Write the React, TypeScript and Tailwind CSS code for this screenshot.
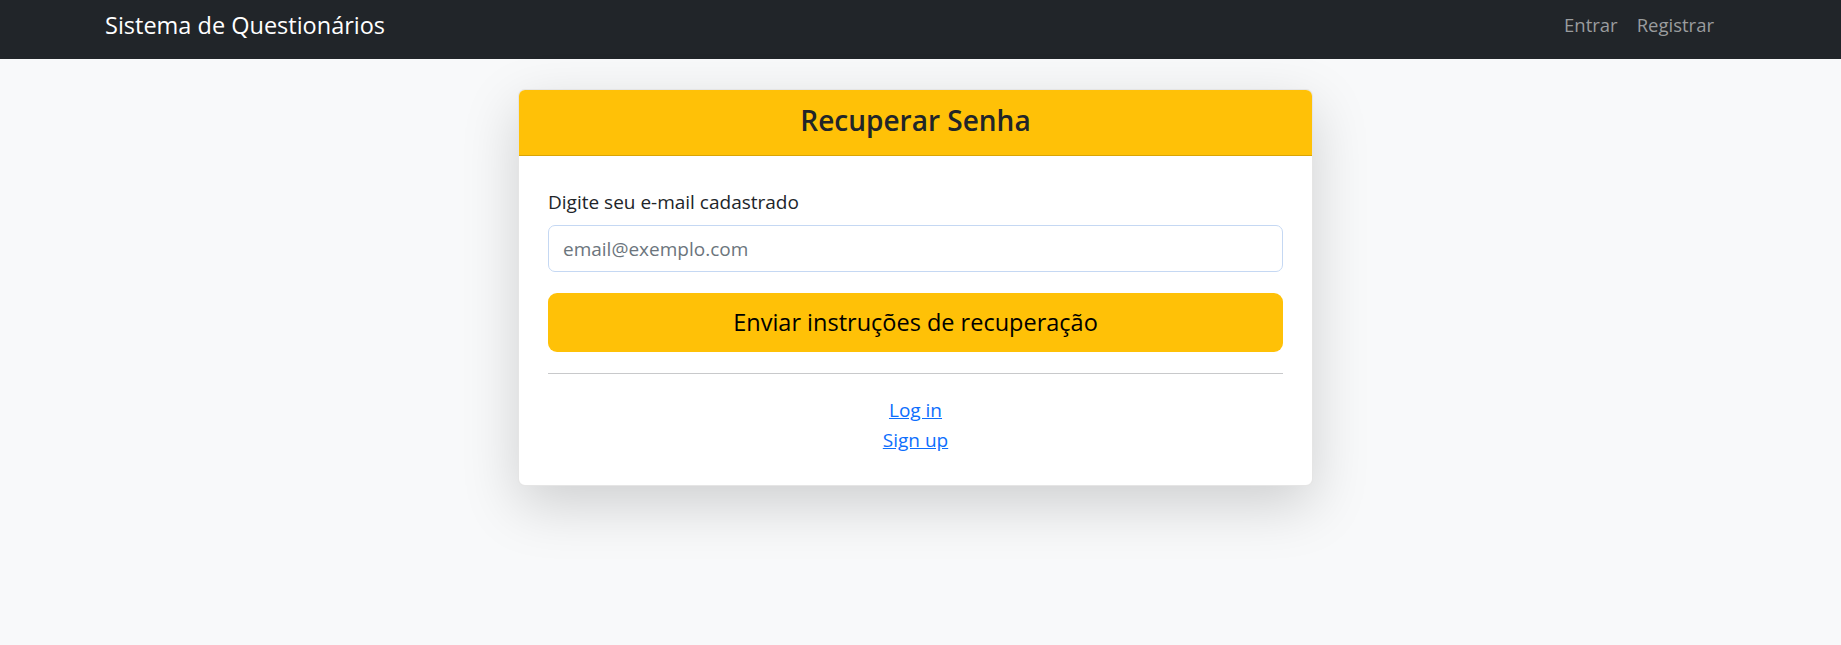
import React from 'react';

export default function App() {
  return (
    <div className="min-h-screen bg-[#f8f9fa] font-['Open_Sans',sans-serif] text-[#212529]">
      {/* Top navbar */}
      <nav className="h-[59px] bg-[#212529]">
        <div className="flex h-full items-center justify-between pl-[105px] pr-[117px]">
          <a href="#" className="pb-[10px] text-[23.5px] leading-[34px] text-white">
            Sistema de Questionários
          </a>
          <div className="flex items-center pb-[10px] text-[18.5px] leading-[28px] text-[#9a9c9e]">
            <a href="#" className="px-[9px]">Entrar</a>
            <a href="#" className="px-[10px]">Registrar</a>
          </div>
        </div>
      </nav>

      {/* Recovery card */}
      <div className="flex justify-center pt-[30px] pr-[10px]">
        <div className="w-[795px] overflow-hidden rounded-[7px] border border-black/10 bg-white shadow-[0_19px_56px_rgba(0,0,0,0.17)]">
          <div className="flex h-[66px] items-center justify-center border-b border-[#d9a406] bg-[#ffc107] pb-[6px]">
            <h3 className="text-[28px] font-semibold leading-[34px] text-[#212529]">Recuperar Senha</h3>
          </div>
          <div className="px-[29px] pt-[32px] pb-[30px]">
            <label className="mb-[9px] block text-[19px] leading-[28px]">Digite seu e-mail cadastrado</label>
            <input
              type="email"
              placeholder="email@exemplo.com"
              className="block h-[47px] w-full rounded-[7px] border border-[#c5d8f3] px-[14px] text-[19px] text-[#212529] placeholder:text-[#6c757d] outline-none"
            />
            <button className="mt-[21px] flex h-[59px] w-full items-center justify-center rounded-[9px] bg-[#ffc107] text-[23.5px] text-black">
              Enviar instruções de recuperação
            </button>
            <hr className="mt-[21px] mb-[21px] border-t border-[#c8c9cb]" />
            <div className="flex flex-col items-center text-[19px] leading-[30px]">
              <a href="#" className="text-[#0d6efd] underline">Log in</a>
              <a href="#" className="text-[#0d6efd] underline">Sign up</a>
            </div>
          </div>
        </div>
      </div>
    </div>
  );
}
